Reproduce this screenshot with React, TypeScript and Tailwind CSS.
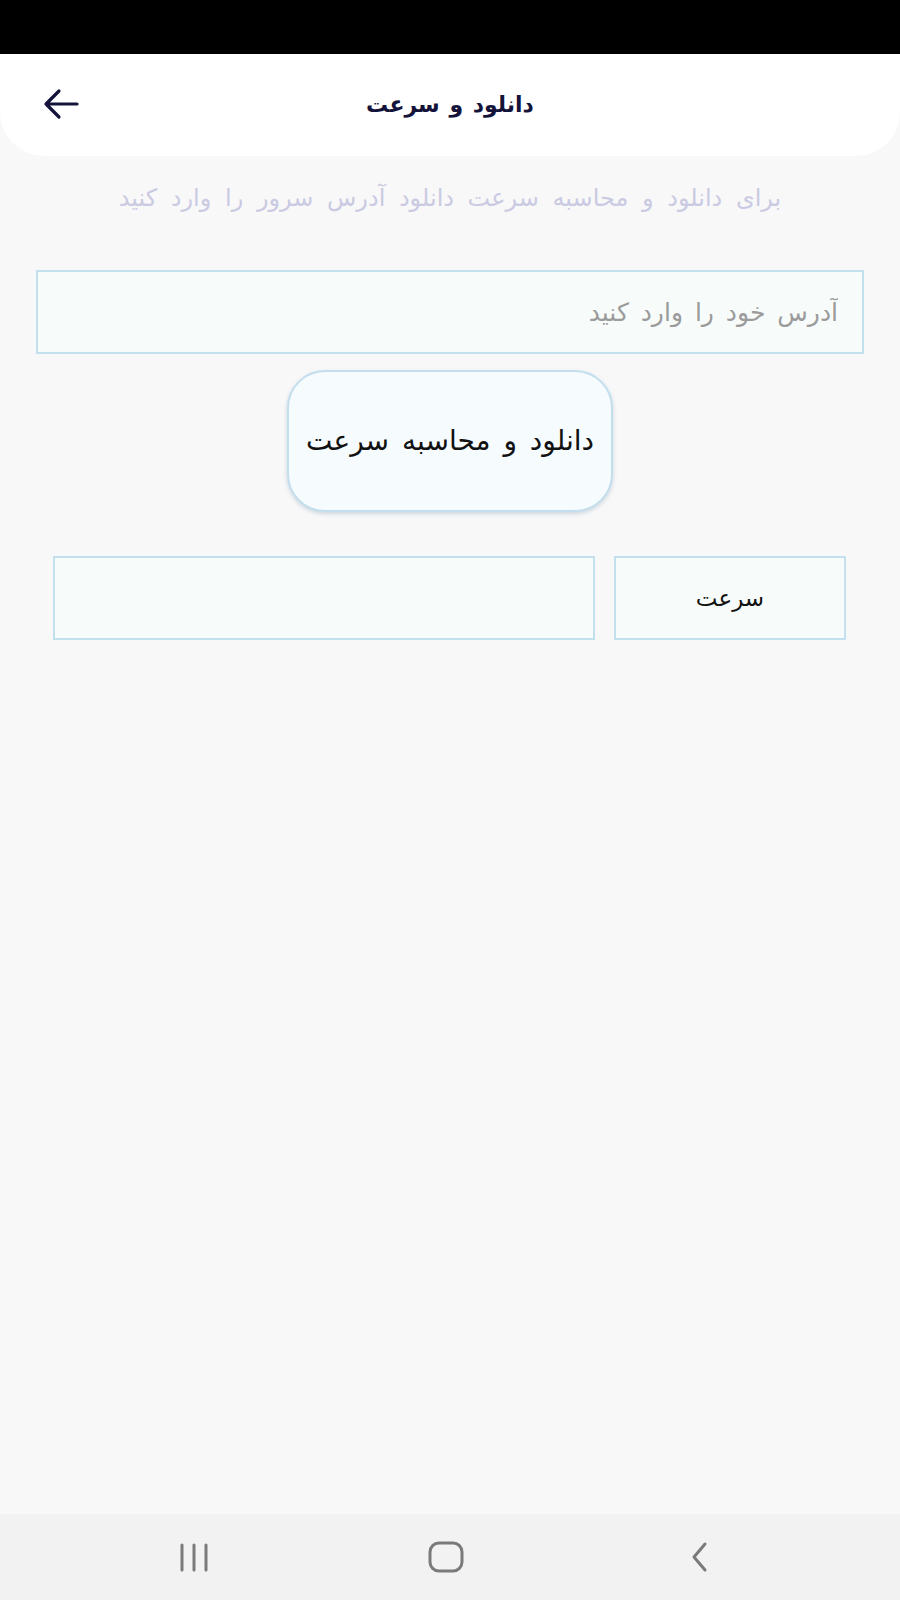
import React from "react";

export default function App() {
  const font = { fontFamily: '"DejaVu Sans", "Noto Sans", sans-serif' };
  return (
    <div className="w-[900px] h-[1600px] flex flex-col bg-[#f8f8f9]" style={font}>
      <div className="h-[54px] bg-black shrink-0" />
      <div className="relative h-[102px] bg-white rounded-b-[44px] shrink-0 flex items-center justify-center">
        <svg className="absolute left-[42px] top-[34px]" width="38" height="32" viewBox="0 0 38 32" fill="none">
          <path d="M35 16H4M17 3L4 16l13 13" stroke="#14143a" strokeWidth="3.2" strokeLinecap="round" strokeLinejoin="round" />
        </svg>
        <div dir="rtl" className="text-[22px] font-bold text-[#14143a] leading-none [word-spacing:2px]">دانلود و سرعت</div>
      </div>
      <div dir="rtl" className="mt-[26px] text-center text-[24px] leading-[32px] text-[#cacae2] [word-spacing:6px]">
        برای دانلود و محاسبه سرعت دانلود آدرس سرور را وارد کنید
      </div>
      <div className="mt-[56px] mx-[36px] h-[84px] border-2 border-[#c3e0ee] bg-[#f7fcfb] flex items-center">
        <input
          dir="rtl"
          placeholder="آدرس خود را وارد کنید"
          className="w-full h-full bg-transparent px-[24px] text-[25px] text-[#333] placeholder:text-[#9b9b9b] outline-none [word-spacing:4px]"
          style={font}
        />
      </div>
      <div className="mt-[16px] flex justify-center">
        <button
          dir="rtl"
          className="w-[326px] h-[142px] rounded-[38px] border-2 border-[#c3dfee] bg-[#f6fbfd] shadow-[0_2px_4px_rgba(120,150,170,0.35)] text-[28px] text-[#111] flex items-center justify-center [word-spacing:4px]"
          style={font}
        >
          دانلود و محاسبه سرعت
        </button>
      </div>
      <div className="mt-[44px] ml-[53px] mr-[54px] flex gap-[19px] h-[84px]">
        <div className="flex-1 border-2 border-[#c3e0ee] bg-[#f7fcfb]" />
        <div dir="rtl" className="w-[232px] border-2 border-[#c3e0ee] bg-[#f7fcfb] flex items-center justify-center text-[23px] text-[#111]">
          سرعت
        </div>
      </div>
      <div className="flex-1" />
      <div className="h-[86px] bg-[#f2f2f2] shrink-0 flex items-center justify-center gap-[212px] pr-[8px]">
        <svg width="40" height="32" viewBox="0 0 40 32">
          <path d="M8 4v25M20 4v25M32 4v25" stroke="#7a7a7a" strokeWidth="3" strokeLinecap="round" />
        </svg>
        <svg width="40" height="36" viewBox="0 0 40 36">
          <rect x="4" y="4" width="32" height="28" rx="9" stroke="#7a7a7a" strokeWidth="3" fill="none" />
        </svg>
        <svg width="40" height="36" viewBox="0 0 40 36">
          <path d="M27 5L16 18l11 13" stroke="#7a7a7a" strokeWidth="3" strokeLinecap="round" strokeLinejoin="round" fill="none" />
        </svg>
      </div>
    </div>
  );
}
